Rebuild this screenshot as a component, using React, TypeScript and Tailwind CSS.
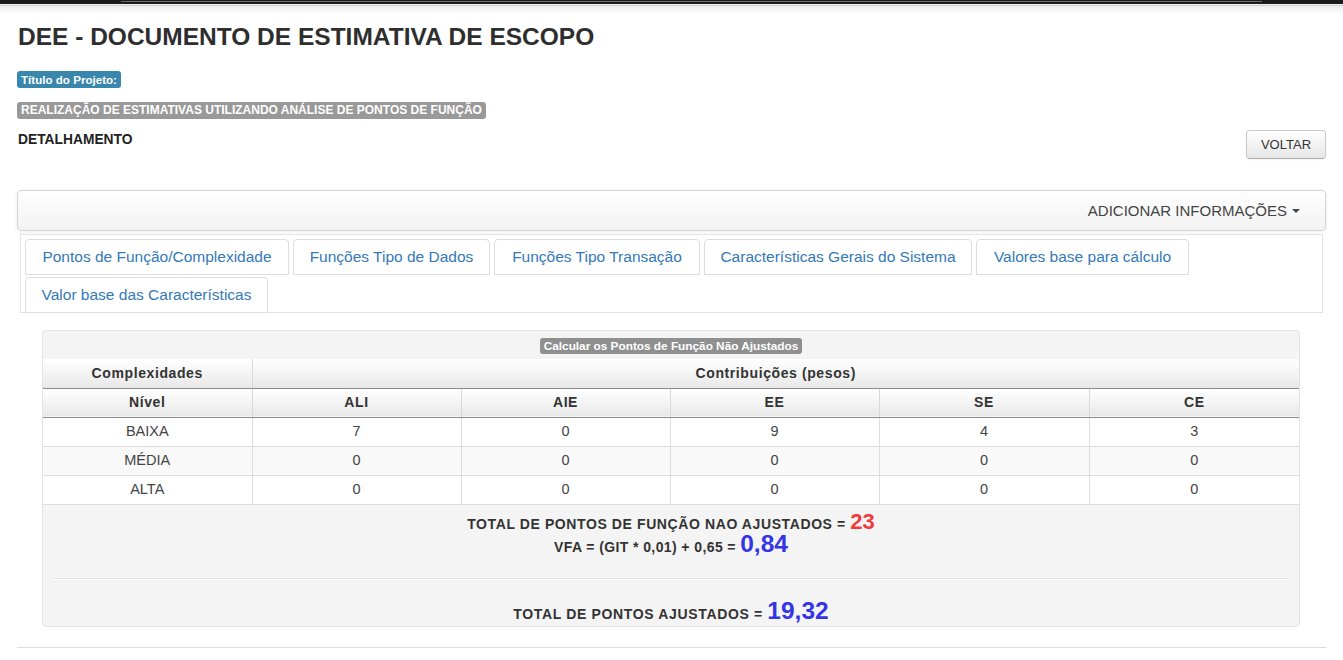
import React from "react";

const tabsRow1 = [
  { label: "Pontos de Função/Complexidade", w: "w-[264px]" },
  { label: "Funções Tipo de Dados", w: "w-[197px]" },
  { label: "Funções Tipo Transação", w: "w-[206px]" },
  { label: "Características Gerais do Sistema", w: "w-[268px]" },
  { label: "Valores base para cálculo", w: "w-[213px]" },
];

const cols = ["ALI", "AIE", "EE", "SE", "CE"];
const rows: (string | number)[][] = [
  ["BAIXA", 7, 0, 9, 4, 3],
  ["MÉDIA", 0, 0, 0, 0, 0],
  ["ALTA", 0, 0, 0, 0, 0],
];

export default function App() {
  return (
    <div className="min-h-[660px] bg-white font-['Liberation_Sans',Arial,sans-serif] text-[#333]">
      {/* top bar */}
      <div className="relative h-[4px] bg-[#1b1b1b]">
        <div className="absolute left-[121px] right-[81px] top-[1px] h-[1px] bg-[#6a6a6a]" />
      </div>
      <div className="h-[1px] bg-[#f2f2f2]" />
      <div className="h-[1px] bg-[#cfcfcf]" />
      <div className="h-[8px] bg-gradient-to-b from-[#ededed] to-white" />

      <div className="px-[17px]">
        <h1 className="mt-[10px] pl-[1px] text-[24.5px] font-bold leading-[26px] text-[#2e2e2e]">
          DEE - DOCUMENTO DE ESTIMATIVA DE ESCOPO
        </h1>

        <div className="mt-[21px] flex">
          <span className="h-[17px] rounded-[3px] bg-[#3a87ad] px-[4px] text-[11.6px] font-bold leading-[17px] text-white">
            Título do Projeto:
          </span>
        </div>
        <div className="mt-[14px] flex">
          <span className="h-[17px] rounded-[3px] bg-[#999999] px-[4px] text-[12px] font-bold leading-[17px] text-white">
            REALIZAÇÃO DE ESTIMATIVAS UTILIZANDO ANÁLISE DE PONTOS DE FUNÇÃO
          </span>
        </div>

        <div className="mt-[11px] flex items-start justify-between">
          <div className="pt-[1px] pl-[1px] text-[13.8px] font-bold leading-[18px] text-[#222]">
            DETALHAMENTO
          </div>
          <button className="h-[29px] w-[80px] rounded-[4px] border border-[#c8c8c8] border-b-[#b0b0b0] bg-gradient-to-b from-white to-[#e6e6e6] text-[13px] leading-[27px] text-[#333] shadow-[inset_0_1px_0_rgba(255,255,255,0.2),0_1px_2px_rgba(0,0,0,0.05)]">
            VOLTAR
          </button>
        </div>

        {/* navbar */}
        <div className="mt-[31px] flex h-[41px] items-center justify-end rounded-[4px] border border-[#d4d4d4] bg-gradient-to-b from-white to-[#f2f2f2] pr-[25px] shadow-[0_1px_4px_rgba(0,0,0,0.065)]">
          <span className="text-[15px] leading-[20px] text-[#444]">ADICIONAR INFORMAÇÕES</span>
          <span className="ml-[5px] mt-[1px] inline-block h-0 w-0 border-x-[4px] border-t-[4px] border-x-transparent border-t-[#444]" />
        </div>

        {/* tabs */}
        <div className="mx-[3px] mt-[3px] border border-[#e3e3e3] pl-[4px] pt-[4px]">
          <div className="flex flex-wrap gap-x-[4px] gap-y-[2px]">
            {tabsRow1.map((t) => (
              <div
                key={t.label}
                className={`${t.w} flex h-[36px] items-center justify-center rounded-t-[4px] border border-[#dddddd] bg-white text-[15.5px] text-[#3479b8]`}
              >
                {t.label}
              </div>
            ))}
          </div>
          <div className="mt-[2px] mb-[-1px] flex">
            <div className="flex h-[36px] w-[243px] items-center justify-center rounded-t-[4px] border border-[#dddddd] bg-white text-[15.5px] text-[#3479b8]">
              Valor base das Características
            </div>
          </div>
        </div>

        {/* panel */}
        <div className="ml-[25px] mr-[26px] mt-[17px] overflow-hidden rounded-[4px] border border-[#e3e3e3] bg-[#f4f4f4]">
          <div className="flex h-[28px] items-start justify-center pt-[7px]">
            <span className="h-[16px] rounded-[3px] bg-[#8f8f8f] px-[4px] text-[11.8px] font-bold leading-[16px] text-white">
              Calcular os Pontos de Função Não Ajustados
            </span>
          </div>

          <table className="w-full table-fixed border-collapse">
            <colgroup>
              <col className="w-[209px]" />
              <col className="w-[209px]" />
              <col className="w-[209px]" />
              <col className="w-[209px]" />
              <col className="w-[210px]" />
              <col />
            </colgroup>
            <thead>
              <tr className="h-[29px]">
                <th className="border-b border-r border-b-[#8c8c8c] border-r-[#d9d9d9] bg-gradient-to-b from-white to-[#e8e8e8] p-0 text-center text-[14px] font-bold tracking-[0.6px] text-[#333]">
                  Complexidades
                </th>
                <th
                  colSpan={5}
                  className="border-b border-b-[#8c8c8c] bg-gradient-to-b from-white to-[#e8e8e8] p-0 text-center text-[14px] font-bold tracking-[0.6px] text-[#333]"
                >
                  Contribuições (pesos)
                </th>
              </tr>
              <tr className="h-[29px]">
                <th className="border-b border-r border-b-[#8c8c8c] border-r-[#d9d9d9] bg-gradient-to-b from-white to-[#e8e8e8] p-0 text-center text-[14px] font-bold tracking-[0.6px] text-[#333]">
                  Nível
                </th>
                {cols.map((c, i) => (
                  <th
                    key={c}
                    className={`border-b border-b-[#8c8c8c] ${i < cols.length - 1 ? "border-r border-r-[#d9d9d9]" : ""} bg-gradient-to-b from-white to-[#e8e8e8] p-0 text-center text-[14px] font-bold tracking-[0.6px] text-[#333]`}
                  >
                    {c}
                  </th>
                ))}
              </tr>
            </thead>
            <tbody>
              {rows.map((r, ri) => (
                <tr key={ri} className={`h-[29px] ${ri === 1 ? "bg-[#f9f9f9]" : "bg-white"}`}>
                  {r.map((v, ci) => (
                    <td
                      key={ci}
                      className={`border-b border-[#dddddd] ${ci < r.length - 1 ? "border-r" : ""} p-0 text-center text-[14.5px] text-[#444]`}
                    >
                      {v}
                    </td>
                  ))}
                </tr>
              ))}
            </tbody>
          </table>

          <div className="pt-[8px] text-center font-bold text-[#333]">
            <div className="leading-[18px]">
              <span className="text-[14px] tracking-[0.6px]">TOTAL DE PONTOS DE FUNÇÃO NAO AJUSTADOS = </span>
              <span className="text-[22px] text-[#ef3b3b]">23</span>
            </div>
            <div className="mt-[2px] leading-[18px]">
              <span className="text-[14px] tracking-[0.4px]">VFA = (GIT * 0,01) + 0,65 = </span>
              <span className="text-[24.5px] text-[#3535e8]">0,84</span>
            </div>
            <div className="mx-[10px] mt-[22px] border-t border-b border-t-[#e4e4e4] border-b-white" />
            <div className="mt-[22px] pb-[3px] leading-[18px]">
              <span className="text-[14px] tracking-[0.65px]">TOTAL DE PONTOS AJUSTADOS = </span>
              <span className="text-[24.5px] text-[#3535e8]">19,32</span>
            </div>
          </div>
        </div>

        <div className="mt-[20px] border-t border-[#dddddd]" />
      </div>
    </div>
  );
}
